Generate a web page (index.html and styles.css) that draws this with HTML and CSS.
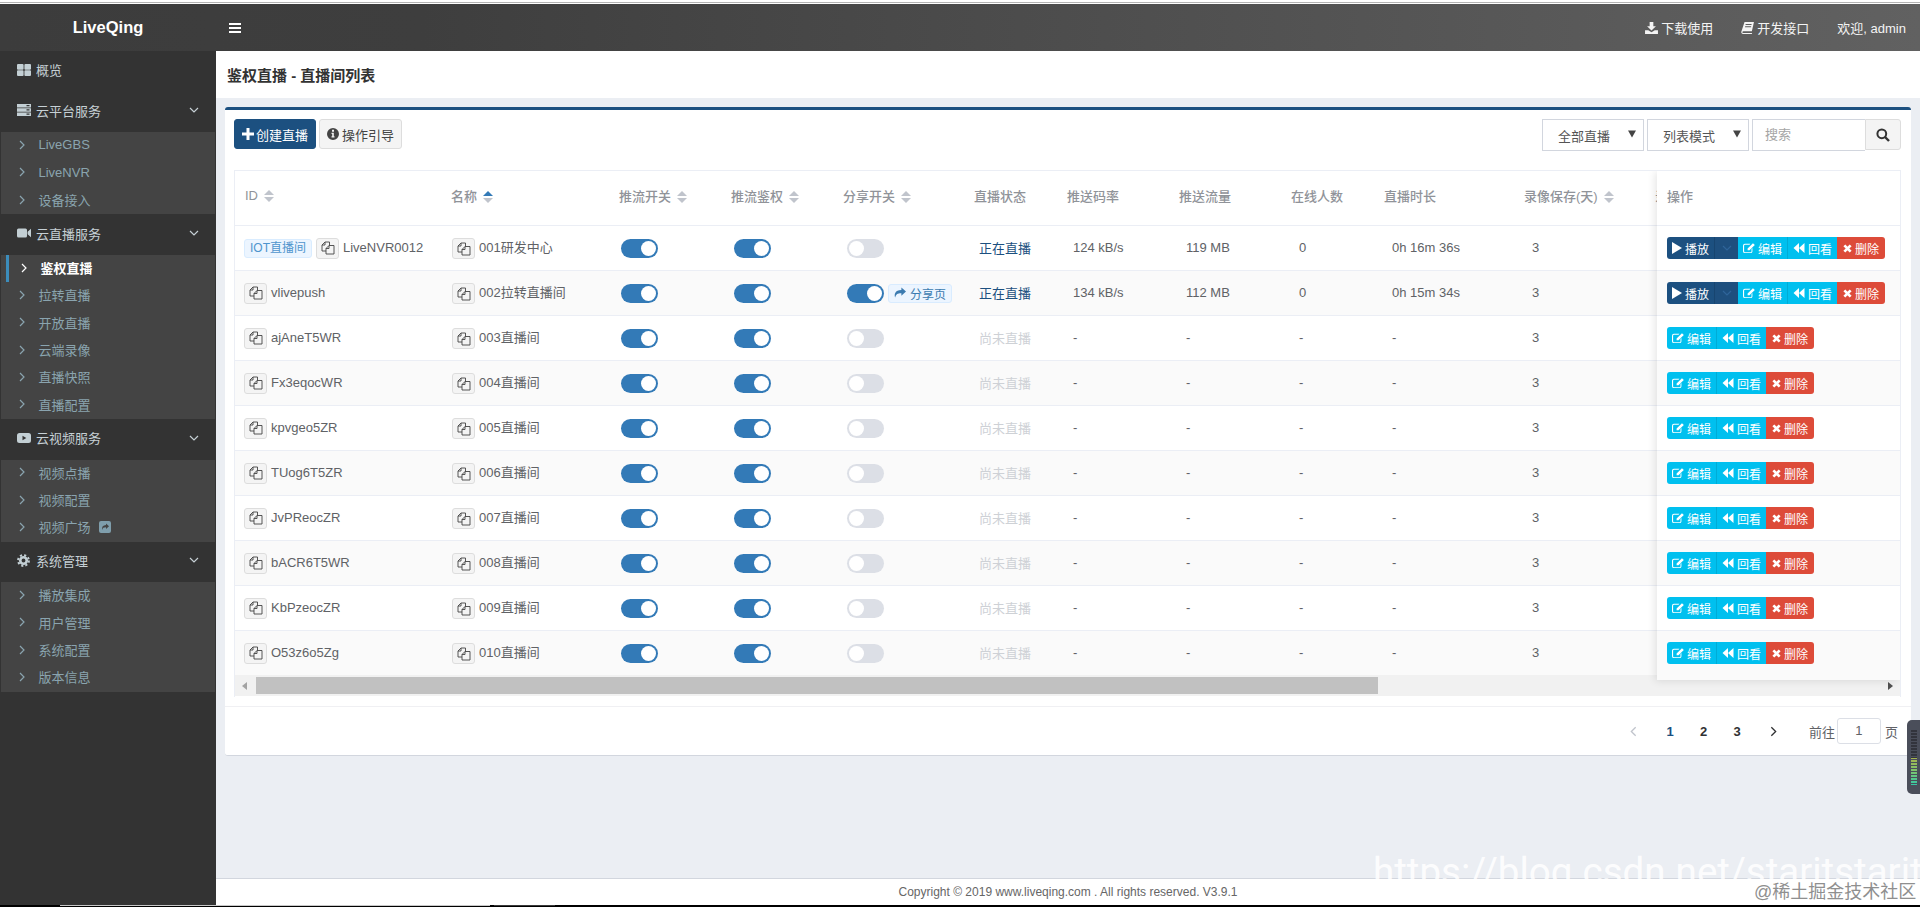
FILE: index.html
```html
<!DOCTYPE html>
<html lang="zh">
<head>
<meta charset="utf-8">
<title>LiveQing</title>
<link rel="stylesheet" href="styles.css">
</head>
<body>
<svg class="sprite" aria-hidden="true">
  <symbol id="i-th" viewBox="0 0 14 12"><path d="M0 1a1 1 0 0 1 1-1h4.600a1 1 0 0 1 1 .9V5a1 1 0 0 1-1 .7H1a1 1 0 0 1-1-.7zM7.400 1a1 1 0 0 1 1-1H13a1 1 0 0 1 1 1v4a1 1 0 0 1-1 .7H8.400a1 1 0 0 1-1-.7zM0 7a1 1 0 0 1 1-.7h4.600a1 1 0 0 1 1 .7v4a1 1 0 0 1-1 1H1a1 1 0 0 1-1-1zM7.400 7a1 1 0 0 1 1-.7H13a1 1 0 0 1 1 .7v4a1 1 0 0 1-1 1H8.400a1 1 0 0 1-1-1z"/></symbol>
  <symbol id="i-server" viewBox="0 0 14 12"><path fill-rule="evenodd" d="M0 0h14v3.400H0zM9.500 1v1.200h3V1zM0 4.300h14v3.400H0zM9.500 5.300v1.200h3V5.300zM0 8.600h14V12H0zM9.500 9.600v1.200h3V9.600z"/></symbol>
  <symbol id="i-video" viewBox="0 0 14 12"><path d="M1.500 1.500h7a1.500 1.500 0 0 1 1.500 1.500v6a1.500 1.500 0 0 1-1.500 1.500h-7A1.500 1.500 0 0 1 0 9V3a1.500 1.500 0 0 1 1.500-1.500zM10.600 4.700 14 1.800v8.400l-3.400-2.900z"/></symbol>
  <symbol id="i-yt" viewBox="0 0 14 12"><path fill-rule="evenodd" d="M2.500 1h9A2.500 2.500 0 0 1 14 3.500v5a2.500 2.500 0 0 1-2.500 2.500h-9A2.500 2.500 0 0 1 0 8.500v-5A2.500 2.500 0 0 1 2.500 1zM5.500 3.800v4.400L9.300 6z"/></symbol>
  <symbol id="i-cog" viewBox="0 0 14 14"><circle cx="7" cy="7" r="3.500" fill="none" stroke="currentColor" stroke-width="2.800"/><circle cx="7" cy="7" r="5.800" fill="none" stroke="currentColor" stroke-width="2.200" stroke-dasharray="2.300 2.250"/></symbol>
  <symbol id="i-chev-d" viewBox="0 0 12 12"><path d="M2 4l4 4 4-4" fill="none" stroke="currentColor" stroke-width="1.200"/></symbol>
  <symbol id="i-chev-r" viewBox="0 0 12 12"><path d="M4 2l4 4-4 4" fill="none" stroke="currentColor" stroke-width="1.200"/></symbol>
  <symbol id="i-chev-l" viewBox="0 0 12 12"><path d="M8 2L4 6l4 4" fill="none" stroke="currentColor" stroke-width="1.200"/></symbol>
  <symbol id="i-bars" viewBox="0 0 12 10"><path d="M0 0h12v2H0zM0 4h12v2H0zM0 8h12v2H0z"/></symbol>
  <symbol id="i-download" viewBox="0 0 14 13"><path d="M5 0h4v4.500h2.800L7 9.300 2.200 4.500H5zM0 9h3.500L7 11l3.500-2H14v4H0z"/></symbol>
  <symbol id="i-book" viewBox="0 0 14 13"><path d="M3.800 0H14l-2.300 10H2.500a1 1 0 0 0 0 2h9.500l-.3 1H2.300C.800 13 0 11.800.3 10.500zM5 2.300l-.2 1h6.500l.2-1zM4.500 4.600l-.2 1h6.500l.2-1z"/></symbol>
  <symbol id="i-plus" viewBox="0 0 12 12"><path d="M4.500 0h3v4.500H12v3H7.500V12h-3V7.500H0v-3h4.500z"/></symbol>
  <symbol id="i-info" viewBox="0 0 12 12"><path fill-rule="evenodd" d="M6 0a6 6 0 1 1 0 12A6 6 0 0 1 6 0zM5 1.800v1.900h2V1.800zM4.500 4.800v1.200h.7v2.300h-.7v1.200h3V8.300h-.7V4.800z"/></symbol>
  <symbol id="i-search" viewBox="0 0 14 14"><circle cx="5.800" cy="5.800" r="4.400" fill="none" stroke="currentColor" stroke-width="2"/><path d="M9 9l4 4" stroke="currentColor" stroke-width="2.400"/></symbol>
  <symbol id="i-play" viewBox="0 0 10 12"><path d="M0 0l10 6-10 6z"/></symbol>
  <symbol id="i-edit" viewBox="0 0 13 12"><path d="M2 1.500h6l-1 1H2.200a1 1 0 0 0-1 1v6a1 1 0 0 0 1 1h6a1 1 0 0 0 1-1V7l1-1v3.800A1.800 1.800 0 0 1 8.400 11.500H2A2 2 0 0 1 0 9.500v-6a2 2 0 0 1 2-2zM10.800 .8l2 2L7 8.500H5V6.500z"/></symbol>
  <symbol id="i-back" viewBox="0 0 11 12"><path d="M5.500 1v10L0 6zM11 1v10L5.500 6z"/></symbol>
  <symbol id="i-times" viewBox="0 0 10 10"><path d="M1.500 1.500l7 7M8.500 1.500l-7 7" fill="none" stroke="currentColor" stroke-width="3"/></symbol>
  <symbol id="i-share" viewBox="0 0 13 12"><path d="M8 0l5 4.500L8 9V6.300C4.500 6.200 2 7 1.300 11 0 7.500 1 2.800 8 2.700z"/></symbol>
  <symbol id="i-ext" viewBox="0 0 12 12"><path fill-rule="evenodd" d="M2 0h8a2 2 0 0 1 2 2v8a2 2 0 0 1-2 2H2a2 2 0 0 1-2-2V2a2 2 0 0 1 2-2zM7 2.500v1.600C4 4.200 2.700 6 3 9c.6-2 1.800-2.700 4-2.700v1.600l3-2.700z"/></symbol>
  <symbol id="i-copy" viewBox="0 0 14 14"><g fill="none" stroke="currentColor" stroke-width=".9"><path d="M4 1H8.500V4.500M4 1L1 4V10H5M1 4H4V1"/><path d="M8 4.500H13V13H5V7.500zM5 7.500H8V4.500"/></g></symbol>
  <symbol id="i-caret" viewBox="0 0 8 8"><path d="M0 .5h8L4 7.500z"/></symbol>
</svg>

<div class="app">
  <div class="top-strip"></div>
  <header class="topbar">
    <div class="logo">LiveQing</div>
    <svg class="i toggle"><use href="#i-bars"/></svg>
    <nav class="topnav">
      <span class="topnav-item"><svg class="i i13"><use href="#i-download"/></svg>下载使用</span>
      <span class="topnav-item"><svg class="i i13"><use href="#i-book"/></svg>开发接口</span>
      <span class="topnav-item">欢迎, admin</span>
    </nav>
  </header>

  <div class="main">
    <aside class="sidebar">
      <div class="group"><svg class="i gi"><use href="#i-th"/></svg>概览</div>
      <div class="group"><svg class="i gi"><use href="#i-server"/></svg>云平台服务<svg class="i gc"><use href="#i-chev-d"/></svg></div>
      <ul class="sub">
        <li><svg class="i sc"><use href="#i-chev-r"/></svg>LiveGBS</li>
        <li><svg class="i sc"><use href="#i-chev-r"/></svg>LiveNVR</li>
        <li><svg class="i sc"><use href="#i-chev-r"/></svg>设备接入</li>
      </ul>
      <div class="group"><svg class="i gi"><use href="#i-video"/></svg>云直播服务<svg class="i gc"><use href="#i-chev-d"/></svg></div>
      <ul class="sub">
        <li class="active"><svg class="i sc"><use href="#i-chev-r"/></svg>鉴权直播</li>
        <li><svg class="i sc"><use href="#i-chev-r"/></svg>拉转直播</li>
        <li><svg class="i sc"><use href="#i-chev-r"/></svg>开放直播</li>
        <li><svg class="i sc"><use href="#i-chev-r"/></svg>云端录像</li>
        <li><svg class="i sc"><use href="#i-chev-r"/></svg>直播快照</li>
        <li><svg class="i sc"><use href="#i-chev-r"/></svg>直播配置</li>
      </ul>
      <div class="group"><svg class="i gi"><use href="#i-yt"/></svg>云视频服务<svg class="i gc"><use href="#i-chev-d"/></svg></div>
      <ul class="sub">
        <li><svg class="i sc"><use href="#i-chev-r"/></svg>视频点播</li>
        <li><svg class="i sc"><use href="#i-chev-r"/></svg>视频配置</li>
        <li><svg class="i sc"><use href="#i-chev-r"/></svg>视频广场<svg class="i ext"><use href="#i-ext"/></svg></li>
      </ul>
      <div class="group"><svg class="i gi cog"><use href="#i-cog"/></svg>系统管理<svg class="i gc"><use href="#i-chev-d"/></svg></div>
      <ul class="sub">
        <li><svg class="i sc"><use href="#i-chev-r"/></svg>播放集成</li>
        <li><svg class="i sc"><use href="#i-chev-r"/></svg>用户管理</li>
        <li><svg class="i sc"><use href="#i-chev-r"/></svg>系统配置</li>
        <li><svg class="i sc"><use href="#i-chev-r"/></svg>版本信息</li>
      </ul>
    </aside>

    <div class="content">
      <div class="page-title">鉴权直播 - 直播间列表</div>
      <div class="content-body">
        <section class="card">
          <div class="toolbar">
            <button class="btn btn-primary"><svg class="i i12"><use href="#i-plus"/></svg>创建直播</button>
            <button class="btn btn-default"><svg class="i i12"><use href="#i-info"/></svg>操作引导</button>
            <div class="filters">
              <div class="select">全部直播<svg class="i caret"><use href="#i-caret"/></svg></div>
              <div class="select">列表模式<svg class="i caret"><use href="#i-caret"/></svg></div>
              <div class="search-input">搜索</div>
              <button class="search-btn"><svg class="i i14"><use href="#i-search"/></svg></button>
            </div>
          </div>

          <div class="table-wrap">
            <table class="grid">
              <colgroup>
                <col class="w206"><col class="w168"><col class="w112"><col class="w112"><col class="w131"><col class="w93"><col class="w112"><col class="w112"><col class="w93"><col class="w140"><col class="w131"><col class="w254">
              </colgroup>
              <thead>
                <tr>
                  <th>ID<span class="sort"></span></th>
                  <th>名称<span class="sort asc"></span></th>
                  <th>推流开关<span class="sort"></span></th>
                  <th>推流鉴权<span class="sort"></span></th>
                  <th>分享开关<span class="sort"></span></th>
                  <th>直播状态</th>
                  <th>推送码率</th>
                  <th>推送流量</th>
                  <th>在线人数</th>
                  <th>直播时长</th>
                  <th>录像保存(天)<span class="sort"></span></th>
                  <th>录像计划</th>
                </tr>
              </thead>
              <tbody>
                <tr>
                  <td><span class="tag">IOT直播间</span><span class="copy"><svg class="i i14"><use href="#i-copy"/></svg></span>LiveNVR0012</td>
                  <td><span class="copy"><svg class="i i14"><use href="#i-copy"/></svg></span>001研发中心</td>
                  <td><span class="switch on"></span></td><td><span class="switch on"></span></td>
                  <td><span class="switch"></span></td>
                  <td class="live">正在直播</td><td>124 kB/s</td><td>119 MB</td><td>0</td><td>0h 16m 36s</td><td>3</td><td></td>
                </tr>
                <tr>
                  <td><span class="copy"><svg class="i i14"><use href="#i-copy"/></svg></span>vlivepush</td>
                  <td><span class="copy"><svg class="i i14"><use href="#i-copy"/></svg></span>002拉转直播间</td>
                  <td><span class="switch on"></span></td><td><span class="switch on"></span></td>
                  <td><span class="switch on"></span><span class="share-tag"><svg class="i i12"><use href="#i-share"/></svg>分享页</span></td>
                  <td class="live">正在直播</td><td>134 kB/s</td><td>112 MB</td><td>0</td><td>0h 15m 34s</td><td>3</td><td></td>
                </tr>
                <tr>
                  <td><span class="copy"><svg class="i i14"><use href="#i-copy"/></svg></span>ajAneT5WR</td>
                  <td><span class="copy"><svg class="i i14"><use href="#i-copy"/></svg></span>003直播间</td>
                  <td><span class="switch on"></span></td><td><span class="switch on"></span></td><td><span class="switch"></span></td>
                  <td class="idle">尚未直播</td><td>-</td><td>-</td><td>-</td><td>-</td><td>3</td><td></td>
                </tr>
                <tr>
                  <td><span class="copy"><svg class="i i14"><use href="#i-copy"/></svg></span>Fx3eqocWR</td>
                  <td><span class="copy"><svg class="i i14"><use href="#i-copy"/></svg></span>004直播间</td>
                  <td><span class="switch on"></span></td><td><span class="switch on"></span></td><td><span class="switch"></span></td>
                  <td class="idle">尚未直播</td><td>-</td><td>-</td><td>-</td><td>-</td><td>3</td><td></td>
                </tr>
                <tr>
                  <td><span class="copy"><svg class="i i14"><use href="#i-copy"/></svg></span>kpvgeo5ZR</td>
                  <td><span class="copy"><svg class="i i14"><use href="#i-copy"/></svg></span>005直播间</td>
                  <td><span class="switch on"></span></td><td><span class="switch on"></span></td><td><span class="switch"></span></td>
                  <td class="idle">尚未直播</td><td>-</td><td>-</td><td>-</td><td>-</td><td>3</td><td></td>
                </tr>
                <tr>
                  <td><span class="copy"><svg class="i i14"><use href="#i-copy"/></svg></span>TUog6T5ZR</td>
                  <td><span class="copy"><svg class="i i14"><use href="#i-copy"/></svg></span>006直播间</td>
                  <td><span class="switch on"></span></td><td><span class="switch on"></span></td><td><span class="switch"></span></td>
                  <td class="idle">尚未直播</td><td>-</td><td>-</td><td>-</td><td>-</td><td>3</td><td></td>
                </tr>
                <tr>
                  <td><span class="copy"><svg class="i i14"><use href="#i-copy"/></svg></span>JvPReocZR</td>
                  <td><span class="copy"><svg class="i i14"><use href="#i-copy"/></svg></span>007直播间</td>
                  <td><span class="switch on"></span></td><td><span class="switch on"></span></td><td><span class="switch"></span></td>
                  <td class="idle">尚未直播</td><td>-</td><td>-</td><td>-</td><td>-</td><td>3</td><td></td>
                </tr>
                <tr>
                  <td><span class="copy"><svg class="i i14"><use href="#i-copy"/></svg></span>bACR6T5WR</td>
                  <td><span class="copy"><svg class="i i14"><use href="#i-copy"/></svg></span>008直播间</td>
                  <td><span class="switch on"></span></td><td><span class="switch on"></span></td><td><span class="switch"></span></td>
                  <td class="idle">尚未直播</td><td>-</td><td>-</td><td>-</td><td>-</td><td>3</td><td></td>
                </tr>
                <tr>
                  <td><span class="copy"><svg class="i i14"><use href="#i-copy"/></svg></span>KbPzeocZR</td>
                  <td><span class="copy"><svg class="i i14"><use href="#i-copy"/></svg></span>009直播间</td>
                  <td><span class="switch on"></span></td><td><span class="switch on"></span></td><td><span class="switch"></span></td>
                  <td class="idle">尚未直播</td><td>-</td><td>-</td><td>-</td><td>-</td><td>3</td><td></td>
                </tr>
                <tr>
                  <td><span class="copy"><svg class="i i14"><use href="#i-copy"/></svg></span>O53z6o5Zg</td>
                  <td><span class="copy"><svg class="i i14"><use href="#i-copy"/></svg></span>010直播间</td>
                  <td><span class="switch on"></span></td><td><span class="switch on"></span></td><td><span class="switch"></span></td>
                  <td class="idle">尚未直播</td><td>-</td><td>-</td><td>-</td><td>-</td><td>3</td><td></td>
                </tr>
              </tbody>
            </table>
            <div class="hscroll">
              <span class="arrow-l"></span>
              <span class="thumb"></span>
              <span class="arrow-r"></span>
            </div>

            <div class="fixed-col">
              <div class="fixed-head">操作</div>
              <div class="fixed-row">
                <span class="acts"><span class="a a-play"><svg class="i i10"><use href="#i-play"/></svg>播放</span><span class="a a-more"><svg class="i i12"><use href="#i-chev-d"/></svg></span><span class="a a-edit"><svg class="i i12"><use href="#i-edit"/></svg>编辑</span><span class="a a-back"><svg class="i i12"><use href="#i-back"/></svg>回看</span><span class="a a-del"><svg class="i i9"><use href="#i-times"/></svg>删除</span></span>
              </div>
              <div class="fixed-row">
                <span class="acts"><span class="a a-play"><svg class="i i10"><use href="#i-play"/></svg>播放</span><span class="a a-more"><svg class="i i12"><use href="#i-chev-d"/></svg></span><span class="a a-edit"><svg class="i i12"><use href="#i-edit"/></svg>编辑</span><span class="a a-back"><svg class="i i12"><use href="#i-back"/></svg>回看</span><span class="a a-del"><svg class="i i9"><use href="#i-times"/></svg>删除</span></span>
              </div>
              <div class="fixed-row"><span class="acts"><span class="a a-edit"><svg class="i i12"><use href="#i-edit"/></svg>编辑</span><span class="a a-back"><svg class="i i12"><use href="#i-back"/></svg>回看</span><span class="a a-del"><svg class="i i9"><use href="#i-times"/></svg>删除</span></span></div>
              <div class="fixed-row"><span class="acts"><span class="a a-edit"><svg class="i i12"><use href="#i-edit"/></svg>编辑</span><span class="a a-back"><svg class="i i12"><use href="#i-back"/></svg>回看</span><span class="a a-del"><svg class="i i9"><use href="#i-times"/></svg>删除</span></span></div>
              <div class="fixed-row"><span class="acts"><span class="a a-edit"><svg class="i i12"><use href="#i-edit"/></svg>编辑</span><span class="a a-back"><svg class="i i12"><use href="#i-back"/></svg>回看</span><span class="a a-del"><svg class="i i9"><use href="#i-times"/></svg>删除</span></span></div>
              <div class="fixed-row"><span class="acts"><span class="a a-edit"><svg class="i i12"><use href="#i-edit"/></svg>编辑</span><span class="a a-back"><svg class="i i12"><use href="#i-back"/></svg>回看</span><span class="a a-del"><svg class="i i9"><use href="#i-times"/></svg>删除</span></span></div>
              <div class="fixed-row"><span class="acts"><span class="a a-edit"><svg class="i i12"><use href="#i-edit"/></svg>编辑</span><span class="a a-back"><svg class="i i12"><use href="#i-back"/></svg>回看</span><span class="a a-del"><svg class="i i9"><use href="#i-times"/></svg>删除</span></span></div>
              <div class="fixed-row"><span class="acts"><span class="a a-edit"><svg class="i i12"><use href="#i-edit"/></svg>编辑</span><span class="a a-back"><svg class="i i12"><use href="#i-back"/></svg>回看</span><span class="a a-del"><svg class="i i9"><use href="#i-times"/></svg>删除</span></span></div>
              <div class="fixed-row"><span class="acts"><span class="a a-edit"><svg class="i i12"><use href="#i-edit"/></svg>编辑</span><span class="a a-back"><svg class="i i12"><use href="#i-back"/></svg>回看</span><span class="a a-del"><svg class="i i9"><use href="#i-times"/></svg>删除</span></span></div>
              <div class="fixed-row last"><span class="acts"><span class="a a-edit"><svg class="i i12"><use href="#i-edit"/></svg>编辑</span><span class="a a-back"><svg class="i i12"><use href="#i-back"/></svg>回看</span><span class="a a-del"><svg class="i i9"><use href="#i-times"/></svg>删除</span></span></div>
            </div>
          </div>

          <div class="pager">
            <svg class="i pg-arrow prev"><use href="#i-chev-l"/></svg>
            <span class="pg-num current">1</span>
            <span class="pg-num">2</span>
            <span class="pg-num">3</span>
            <svg class="i pg-arrow next"><use href="#i-chev-r"/></svg>
            <span class="pg-label">前往</span>
            <span class="pg-input">1</span>
            <span class="pg-unit">页</span>
          </div>
        </section>
      </div>
      <footer class="footer">Copyright © 2019 www.liveqing.com . All rights reserved. V3.9.1</footer>
    </div>
  </div>

  <div class="bottom-strip"><span class="seg-a"></span><span class="seg-b"></span></div>
</div>

<div class="watermark">https://blog.csdn.net/staritstarit</div>
<div class="juejin">@稀土掘金技术社区</div>
<div class="meter"><span class="meter-bars"></span></div>
</body>
</html>
```
FILE: styles.css
```css
* { box-sizing: border-box; }
html, body { margin: 0; height: 100%; overflow: hidden; }
body {
  font-family: "Liberation Sans", "Noto Sans CJK SC", sans-serif;
  font-size: 13px;
  color: #606266;
  background: #000;
}
.sprite { position: absolute; width: 0; height: 0; }
.i { display: inline-block; fill: currentColor; flex: none; }
.i9 { width: 9px; height: 9px; }
.i10 { width: 10px; height: 12px; }
.i12 { width: 12px; height: 12px; }
.i13 { width: 13px; height: 12px; }
.i14 { width: 14px; height: 14px; }

.app { display: flex; flex-direction: column; height: 907px; }
.top-strip { height: 4px; flex: none; background: linear-gradient(#fff 2px, #b4b4b4 2px, #b4b4b4 3px, #fff 3px); }

/* top bar */
.topbar {
  height: 47px; flex: none; display: flex; align-items: center; color: #fff;
  background: linear-gradient(90deg, #3c3c3c 0, #3e3e3e 420px, #616161 1920px);
}
.logo { width: 216px; text-align: center; font-size: 16.5px; font-weight: 700; }
.toggle { width: 12px; height: 10px; margin-left: 13px; }
.topnav { margin-left: auto; display: flex; align-items: center; padding-right: 14px; color: #f4f4f4; }
.topnav-item { display: flex; align-items: center; gap: 3px; margin-left: 28px; }

/* layout */
.main { flex: 1; display: flex; min-height: 0; }
.sidebar { width: 216px; flex: none; background: #333; color: #c6d0d5; padding: 0; }
.group { height: 40.67px; display: flex; align-items: center; padding-left: 17px; padding-bottom: 3px; }
.gi { width: 14px; height: 12px; margin-right: 5px; color: #c3cfd4; }
.gi.cog { height: 13px; width: 13px; margin-right: 6px; }
.gc { width: 12px; height: 12px; margin-left: auto; margin-right: 16px; }
.sub { list-style: none; margin: 0 1px; padding: 0; background: #444; color: #8aa4af; }
.sub li { height: 27.33px; display: flex; align-items: center; padding-left: 15px; padding-bottom: 2px; }
.sc { width: 12px; height: 12px; margin-right: 10.5px; }
.sub li.active { color: #fff; font-weight: 700; padding-left: 12px; box-shadow: inset 3px 0 0 #3c8dbc; margin-left: 5px; }
.ext { width: 12px; height: 12px; margin-left: 8px; color: #7f9eac; }

.content { flex: 1; min-width: 0; display: flex; flex-direction: column; background: #ebeef3; }
.page-title { height: 47px; flex: none; background: #fff; display: flex; align-items: center; padding-left: 11px; font-size: 15px; font-weight: 700; color: #333; }
.content-body { flex: 1; padding: 9px 9px 0; min-height: 0; }
.footer { height: 27px; flex: none; background: #fff; border-top: 1px solid #d2d6de; text-align: center; font-size: 12px; line-height: 26px; color: #666; }

/* card */
.card { height: 649px; background: #fff; border-top: 3px solid #1c5080; border-bottom: 1px solid #d2d6de; border-radius: 3px; padding: 9px 10px 0 9px; }
.toolbar { height: 51px; display: flex; align-items: flex-start; }
.btn { height: 30px; border-radius: 3px; font: inherit; display: inline-flex; align-items: center; gap: 2px; padding: 0; justify-content: center; }
.btn-primary { width: 82px; background: #1c5080; border: 1px solid #1c5080; color: #fff; }
.btn-default { width: 83px; margin-left: 3px; background: #f4f4f4; border: 1px solid #ddd; color: #444; gap: 3px; }
.filters { margin-left: auto; display: flex; align-items: flex-start; }
.select { width: 102px; height: 32px; margin-right: 3px; border: 1px solid #d2d6de; padding-left: 15px; padding-right: 7px; display: flex; align-items: center; justify-content: space-between; color: #555; background: #fff; }
.caret { width: 8px; height: 8px; color: #444; margin-top: -2px; }
.search-input { width: 113px; height: 32px; border: 1px solid #d2d6de; border-right: 0; padding-left: 12px; line-height: 30px; color: #a5a5a5; }
.search-btn { width: 36px; height: 31px; background: #f4f4f4; border: 1px solid #ddd; border-radius: 0 3px 3px 0; color: #333; padding: 0; display: flex; align-items: center; justify-content: center; }

/* table */
.table-wrap { position: relative; overflow: hidden; height: 527px; border-top: 1px solid #ebeef5; border-left: 1px solid #ebeef5; border-right: 1px solid #ebeef5; }
.grid { border-collapse: separate; border-spacing: 0; table-layout: fixed; width: 1664px; }
.w206 { width: 206px; } .w168 { width: 168px; } .w112 { width: 112px; } .w131 { width: 131px; }
.w93 { width: 93px; } .w140 { width: 140px; } .w254 { width: 254px; }
.grid th { height: 55px; padding: 0 0 6px 10px; text-align: left; font-weight: 500; color: #909399; border-bottom: 1px solid #ebeef5; white-space: nowrap; overflow: hidden; background: #fff; }
.grid td { height: 45px; padding: 0 0 2px 9px; border-bottom: 1px solid #ebeef5; white-space: nowrap; overflow: hidden; }
.grid tbody tr:nth-child(even) td { background: #fafafa; }
.grid tbody tr:last-child td { border-bottom: 0; height: 44px; }
.grid td:nth-child(1) { padding-bottom: 0; }
.grid td:nth-child(2) { padding-left: 11px; padding-bottom: 0; }
.grid td:nth-child(3) { padding-left: 12px; }
.grid td:nth-child(4) { padding-left: 13px; }
.grid td:nth-child(5) { padding-left: 14px; }
.grid td:nth-child(6) { padding-left: 15px; }
.grid td:nth-child(7) { padding-left: 16px; }
.grid td:nth-child(8) { padding-left: 17px; }
.grid td:nth-child(9) { padding-left: 18px; }
.grid td:nth-child(10) { padding-left: 18px; }
.grid td:nth-child(11) { padding-left: 18px; }
.live { color: #1c5080; }
.grid td.idle { color: #ced1d6; }

.sort { display: inline-block; vertical-align: -2px; margin-left: 6px; width: 10px; height: 12px; position: relative; }
.sort::before, .sort::after { content: ""; position: absolute; left: 0; border-left: 5px solid transparent; border-right: 5px solid transparent; }
.sort::before { top: 0; border-bottom: 5.5px solid #c0c4cc; }
.sort::after { bottom: 0; border-top: 5.5px solid #c0c4cc; }
.sort.asc::before { border-bottom-color: #337ab7; }

.tag { display: inline-block; height: 19px; line-height: 17px; padding: 0 5px; margin-right: 4px; font-size: 12px; color: #4f94cd; background: #ecf5ff; border: 1px solid #d9ecff; border-radius: 3px; vertical-align: middle; }
.copy { display: inline-flex; align-items: center; justify-content: center; width: 23px; height: 21px; margin-right: 4px; background: #f4f4f4; border: 1px solid #ddd; border-radius: 3px; color: #444; vertical-align: middle; }
.switch { display: inline-block; position: relative; width: 37px; height: 19px; margin-top: 2px; border-radius: 10px; background: #dcdfe6; vertical-align: middle; }
.switch::after { content: ""; position: absolute; top: 2px; left: 2px; width: 15px; height: 15px; border-radius: 50%; background: #fff; }
.switch.on { background: #337ab7; }
.switch.on::after { left: 20px; }
.share-tag { display: inline-flex; align-items: center; gap: 4px; height: 19px; padding: 0 5px; margin: 2px 0 0 4px; font-size: 12px; color: #3b7bb0; background: #ecf5ff; border: 1px solid #d9ecff; border-radius: 3px; vertical-align: middle; }

.hscroll { height: 21px; background: #f1f1f1; display: flex; align-items: center; }
.arrow-l, .arrow-r { width: 0; height: 0; border-top: 4.5px solid transparent; border-bottom: 4.5px solid transparent; flex: none; }
.arrow-l { border-right: 5px solid #a3a3a3; margin-left: 7px; }
.thumb { width: 1122px; height: 17px; background: #c1c1c1; margin-left: 9px; }
.arrow-r { border-left: 5px solid #505050; margin-left: auto; margin-right: 7px; }

.fixed-col { position: absolute; top: 0; right: 0; width: 243px; background: #fff; box-shadow: -2px 1px 8px rgba(0, 0, 0, .1); }
.fixed-head { height: 55px; padding: 0 0 6px 10px; display: flex; align-items: center; font-weight: 500; color: #909399; border-bottom: 1px solid #ebeef5; }
.fixed-row { height: 45px; padding: 0 0 0 10px; display: flex; align-items: center; border-bottom: 1px solid #ebeef5; }
.fixed-row:nth-child(odd) { background: #fafafa; }
.fixed-row.last { height: 49px; border-bottom: 0; padding-bottom: 5px; }
.acts { display: inline-flex; height: 22px; font-size: 12px; color: #fff; }
.a { display: inline-flex; align-items: center; justify-content: center; gap: 3px; height: 22px; }
.a-play { width: 48px; background: #1c5080; border-right: 1px solid #174570; border-radius: 3px 0 0 3px; }
.a-more { width: 23px; background: #1e4f7e; color: #2f659a; }
.a-edit { width: 50px; background: #00c0ef; border-right: 1px solid #00acd6; }
.a-back { width: 49px; background: #00c0ef; }
.a-del { width: 48px; background: #dd4b39; border-radius: 0 3px 3px 0; }
.acts > .a-edit:first-child { border-radius: 3px 0 0 3px; }

/* pager */
.pager { height: 49px; margin: 9px -10px 0 -9px; border-top: 1px solid #f0f0f3; display: flex; align-items: center; padding-right: 13px; justify-content: flex-end; color: #303133; }
.pg-arrow { width: 13px; height: 13px; margin: 0 10px; color: #303133; }
.pg-arrow.prev { color: #c0c4cc; margin-right: 13px; }
.pg-arrow.next { margin-left: 13px; }
.pg-num { width: 33.5px; text-align: center; font-weight: 700; }
.pg-num.current { color: #1c5080; }
.pg-label { margin-left: 19px; color: #606266; }
.pg-input { width: 44px; height: 26px; margin-left: 2px; border: 1px solid #dcdfe6; border-radius: 3px; text-align: center; line-height: 24px; color: #606266; }
.pg-unit { margin-left: 4px; color: #606266; }

.bottom-strip { height: 2px; flex: none; background: #000; display: flex; align-items: flex-start; }
.seg-a { width: 430px; height: 1px; margin-left: 60px; background: #c8c8c8; }
.seg-b { width: 61px; height: 1px; margin-left: 4px; background: #3a3a3a; }

/* overlays */
.watermark { position: absolute; left: 1373px; top: 847px; font-family: Roboto, sans-serif; font-size: 38.5px; line-height: 50px; color: rgba(255, 255, 255, .9); white-space: nowrap; }
.juejin { position: absolute; left: 1754px; top: 881px; font-size: 18px; line-height: 22px; color: #8f8f8f; white-space: nowrap; }
.meter { position: absolute; left: 1907px; top: 720px; width: 13px; height: 74px; border-radius: 5px 0 0 5px; background: #4a4e5a; padding: 10px 3px 0 4px; }
.meter-bars { display: block; height: 55px; background:
  repeating-linear-gradient(transparent 0 2px, #4a4e5a 2px 3px),
  linear-gradient(#32343c 0 50%, #a9b44c 50%, #7cc46f 75%, #35c8a5 100%); }
```
